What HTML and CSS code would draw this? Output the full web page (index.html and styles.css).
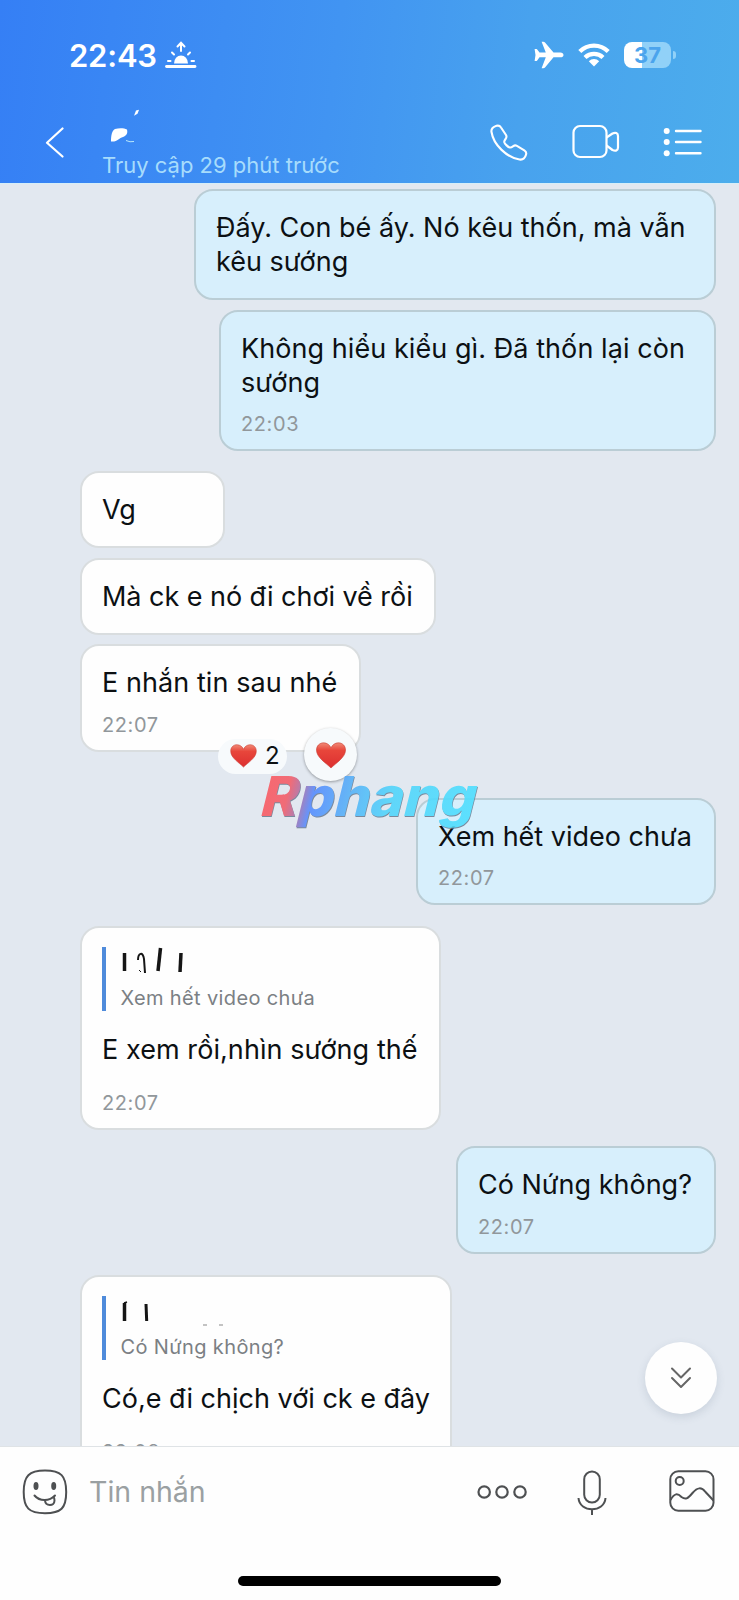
FILE: index.html
```html
<!DOCTYPE html>
<html lang="vi">
<head>
<meta charset="utf-8">
<title>Tin nhắn</title>
<link rel="stylesheet" href="styles.css">
</head>
<body>
<div class="app">
  <header class="header">
    <div class="status">
      <span class="clock">22:43</span>
      <svg class="sunrise" width="32" height="28" viewBox="0 0 32 28" fill="none" stroke="#fff" stroke-width="2" stroke-linecap="round">
        <path d="M1.500 25.500h28.500" stroke-width="2.800"/><path d="M16 10V2M12.500 5.500L16 1.800l3.500 3.700M7 11.500l2 2M25 11.500l-2 2M3 20h2.500M26.500 20H29"/>
        <path d="M9 22.500a7 8 0 0 1 14 0z" fill="#fff" stroke="none"/>
      </svg>
      <span class="spacer"></span>
      <svg width="30" height="28" viewBox="0 0 30 28" fill="#fff"><path d="M26.500 11.500c1.700 0 3 1.100 3 2.400s-1.300 2.400-3 2.400h-7L11 26.500c-.4.500-1 .7-1.700.7H7.600l4.200-10.900H5.500l-2.300 3.200c-.3.400-.7.500-1.200.5H.6L1.500 14 .6 7.900H2c.5 0 .9.100 1.200.5l2.300 3.100h6.300L7.600.8h1.700c.7 0 1.300.2 1.700.7l8.500 10z"/></svg>
      <svg class="wifi" width="32" height="26" viewBox="0 0 32 26" fill="none" stroke="#fff" stroke-width="4.300"><path d="M1.800 9.500a20 20 0 0 1 28.400 0M7 15.500a13 13 0 0 1 18 0"/><path d="M16 24.500l-5.200-5.300a7.500 7.500 0 0 1 10.400 0z" fill="#fff" stroke="none"/></svg>
      <span class="battery">37</span><span class="battery-tip"></span>
    </div>
    <div class="nav">
      <svg class="back" width="20" height="31" viewBox="0 0 20 31" fill="none" stroke="#fff" stroke-width="2.200" stroke-linecap="round" stroke-linejoin="round"><path d="M17.500 1.500L2 15.800l15.500 13.700"/></svg>
      <div class="contact">
        <svg width="60" height="36" viewBox="0 0 60 36"><path d="M34 2.500l3-.7-1.500 4-3.500 2z" fill="#fff"/><path d="M9 33.500c0-6 1-11 4-12.500 4-1 9-1 12 .5 1 4-.5 6-4 7.500-4 1-5 5-12 4.500z" fill="#fff"/><path d="M24 32.500q4 2 8 1" stroke="#b9e8fb" fill="none"/></svg>
        <span class="seen">Truy cập 29 phút trước</span>
      </div>
      <svg class="phone" width="38" height="38" viewBox="0 0 38 38" fill="none" stroke="#fff" stroke-width="2.100" stroke-linejoin="round"><path d="M1.500 8C1 5.500 3 3 6.500 1.800c2-.6 3.300-.2 4.500 1.700l5 7.500c1 1.600.6 2.500-.4 4-.9 1.200-1.600 2-1.300 3.200.5 1.700 3.800 5 5.500 5.300 1.200.2 2-.3 3.500-1.400 1.300-.9 2.200-1 3.600-.2l7.400 4.400c1.900 1.200 2.400 2.300 1.700 4.500C35 34 32.500 36 29.500 35.500 17 33.500 3.500 21 1.500 8z"/></svg>
      <svg class="video" width="48" height="36" viewBox="0 0 48 36" fill="none" stroke="#fff" stroke-width="2.200" stroke-linejoin="round"><rect x="1.500" y="2" width="33" height="31" rx="6.500"/><path d="M34.500 13.500l6-4c3-1.500 5.500-.5 5.500 2.500v11.500c0 3-2.500 4-5.500 2.500l-6-4.500"/></svg>
      <svg class="list" width="40" height="30" viewBox="0 0 40 30" fill="#fff"><circle cx="3.700" cy="4" r="3"/><circle cx="3.700" cy="15" r="3"/><circle cx="3.700" cy="26.300" r="3"/><path d="M13 4h24.500M13 15h24.500M13 26.300h24.500" stroke="#fff" stroke-width="2.400" stroke-linecap="round"/></svg>
    </div>
  </header>

  <main class="chat">
    <div class="bubble out w522"><p>Đấy. Con bé ấy. Nó kêu thốn, mà vẫn<br>kêu sướng</p></div>
    <div class="bubble out timed w497"><p class="loose">Không hiểu kiểu gì. Đã thốn lại còn<br>sướng</p><time>22:03</time></div>
    <div class="bubble in w145 turn"><p>Vg</p></div>
    <div class="bubble in w356"><p class="snug">Mà ck e nó đi chơi về rồi</p></div>
    <div class="bubble in timed w281"><p class="loose">E nhắn tin sau nhé</p><time>22:07</time>
      <div class="reactions">
        <span class="count"><svg width="27" height="24" viewBox="0 0 30 27"><use href="#heart"/></svg>2</span>
        <span class="react"><svg width="30" height="27" viewBox="0 0 30 27"><use href="#heart"/></svg></span>
      </div>
    </div>
    <div class="bubble out timed w300 after-reaction"><p>Xem hết video chưa</p><time>22:07</time>
      <svg class="watermark" width="240" height="70" viewBox="0 0 240 70">
        <defs>
          <linearGradient id="brand" gradientUnits="userSpaceOnUse" x1="8" y1="0" x2="225" y2="0"><stop offset="0" stop-color="#fb5b62"/><stop offset=".12" stop-color="#f25f6b"/><stop offset=".19" stop-color="#9f76b6"/><stop offset=".24" stop-color="#568cff"/><stop offset=".4" stop-color="#58b0f7"/><stop offset=".6" stop-color="#52d5fb"/><stop offset="1" stop-color="#4fdfff"/></linearGradient>
        </defs>
        <g class="brand-text" transform="skewX(-14)"><text class="brand-shadow" x="11" y="49" textLength="215" lengthAdjust="spacingAndGlyphs">Rphang</text><text x="10" y="47.500" textLength="215" lengthAdjust="spacingAndGlyphs" fill="url(#brand)">Rphang</text></g>
      </svg>
    </div>
    <div class="bubble in timed quoted w361 turn21">
      <div class="quote"><svg width="110" height="30" viewBox="0 0 110 30" fill="none" stroke="#151515"><path d="M3.500 6v18" stroke-width="3.500"/><path d="M17 13c0-7 5-9 6-1l1 14" stroke-width="2"/><path d="M18 23l2 2" stroke-width="1"/><path d="M39.500 1L37 24" stroke-width="3.500"/><path d="M60 6l-1 19" stroke-width="3.500"/></svg><span>Xem hết video chưa</span></div>
      <p class="loose">E xem rồi,nhìn sướng thế</p><time>22:07</time>
    </div>
    <div class="bubble out timed w260 turn16"><p>Có Nứng không?</p><time>22:07</time></div>
    <div class="bubble in timed quoted w372 turn21">
      <div class="quote"><svg width="110" height="30" viewBox="0 0 110 30" fill="none" stroke="#151515"><path d="M3.500 7v18" stroke-width="3.500"/><path d="M3 7l3-1" stroke-width="1.500"/><path d="M25 8l.7 17" stroke-width="3"/><path d="M82 29h4M98 29h4" stroke="#888" stroke-width="1"/></svg><span>Có Nứng không?</span></div>
      <p>Có,e đi chịch với ck e đây</p><time>22:08</time>
    </div>
    <button class="scroll-down" aria-label="Xuống cuối"><svg width="22" height="24" viewBox="0 0 22 24" fill="none" stroke="#666" stroke-width="2" stroke-linecap="round" stroke-linejoin="round"><path d="M2 2.500l9 9 9-9M2 12l9 9 9-9"/></svg></button>
  </main>

  <footer class="footer">
    <div class="composer">
      <svg class="sticker" width="46" height="46" viewBox="0 0 46 46" fill="none" stroke="#4e5052" stroke-width="2"><path d="M23 1.600c16 0 21.200 5 21.200 21.400S39 44.200 23 44.200 1.700 39 1.700 23 7 1.600 23 1.600z"/><ellipse cx="14" cy="17" rx="2.500" ry="4" fill="#4e5052" stroke="none"/><ellipse cx="31.700" cy="17" rx="2.500" ry="4" fill="#4e5052" stroke="none"/><path d="M12.500 26.500c5 6 15 6 20.500 0" stroke-linecap="round"/><path d="M23 31.500c.5 6 9.500 6 9.500 0 0-1.500-.5-3-1-3.500"/></svg>
      <span class="placeholder">Tin nhắn</span>
      <svg class="more" width="50" height="16" viewBox="0 0 50 16" fill="none" stroke="#4e5052" stroke-width="2.200"><circle cx="7.200" cy="8" r="5.700"/><circle cx="25" cy="8" r="5.700"/><circle cx="43" cy="8" r="5.700"/></svg>
      <svg class="mic" width="30" height="46" viewBox="0 0 30 46" fill="none" stroke="#4e5052" stroke-width="2"><rect x="7.200" y="1.500" width="15.600" height="31" rx="7.800"/><path d="M1.500 28c1 15 26 15 27 0M15 39v6"/></svg>
      <svg class="image" width="46" height="42" viewBox="0 0 46 42" fill="none" stroke="#4e5052" stroke-width="2"><rect x="1.300" y="1.300" width="43.200" height="39.400" rx="8"/><circle cx="10.700" cy="11" r="4"/><path d="M1.500 30c4-7 7-7 11-3 4 3 6 2 11-4 5-6 9-6 13-1l8 8.500"/></svg>
    </div>
    <div class="home"></div>
  </footer>
</div>
<svg class="symbols" width="0" height="0">
  <defs>
    <linearGradient id="red" x1="0" y1="0" x2="0" y2="1"><stop offset="0" stop-color="#f08b78"/><stop offset=".3" stop-color="#e8463b"/><stop offset="1" stop-color="#dc2f30"/></linearGradient>
    <symbol id="heart" viewBox="0 0 30 27"><path d="M15 26C10 21 .5 15.500.5 8 .5 3.800 3.700.8 7.500.8c3.400 0 6.200 2 7.500 5 1.300-3 4.100-5 7.500-5 3.800 0 7 3 7 7.200C29.500 15.500 20 21 15 26z" fill="url(#red)" stroke="#c93a30" stroke-width=".6"/></symbol>
  </defs>
</svg>
</body>
</html>
```

FILE: styles.css
```css
* { box-sizing: border-box; }
body { margin: 0; background: #fefefe; font-family: Inter, "Noto Sans", sans-serif; color: #0c1013; }
svg { display: block; flex: none; }
p { margin: 0; }
.symbols { position: absolute; }
.app { width: 739px; height: 1600px; display: flex; flex-direction: column; overflow: hidden; }

.header { height: 183px; flex: none; background: linear-gradient(97deg, #357ff5 0%, #4194f2 45%, #48a2ee 70%, #4cadec 100%); color: #fff; }
.status { height: 110px; padding: 0 68px 0 69px; display: flex; align-items: center; }
.clock { font-size: 31px; font-weight: 600; letter-spacing: -.2px; width: 96px; white-space: nowrap; }
.spacer { flex: 1; }
.wifi { margin: 0 14px 0 14px; }
.battery { width: 47px; height: 26px; border-radius: 8px; background: linear-gradient(90deg, #fff 38%, #91d1f8 38%); color: #4ba4ed; font-size: 22px; line-height: 26px; font-weight: 700; text-align: center; }
.battery-tip { width: 3px; height: 8px; margin-left: 2px; border-radius: 0 3px 3px 0; background: #91d1f8; margin-right: -5px; }
.nav { height: 73px; display: flex; align-items: flex-start; padding: 0 35px 0 45px; }
.back { margin-top: 17px; }
.contact { width: 387px; padding-left: 37px; margin-top: -2px; }
.seen { display: block; color: #a7dcfc; font-size: 22px; line-height: 26px; margin-top: 8px; white-space: nowrap; }
.phone { margin-top: 14px; margin-left: 38px; }
.video { margin-top: 14px; margin-left: 44px; }
.list { margin-top: 17px; margin-left: 43px; }

.chat { position: relative; height: 1263px; flex: none; overflow: hidden; background: #e2e8f0; padding: 5px 23px 0 80px; display: flex; flex-direction: column; border-top: 1px solid #d6eef8; }
.bubble { position: relative; flex: none; border: 2px solid #d9dddf; border-radius: 19px; padding: 20px 20px 19px 20px; background: #fefefe; font-size: 27px; line-height: 34px; white-space: nowrap; margin-top: 9.500px; }
.bubble:first-child { margin-top: 0; }
.bubble.timed { padding-bottom: 13px; }
.bubble.out { align-self: flex-end; background: #d7effc; border-color: #bacdd5; }
.bubble.in { align-self: flex-start; }
.bubble.quoted { padding-top: 19px; }
time { display: block; margin-top: 12.500px; font-size: 20px; line-height: 24px; color: #91979b; letter-spacing: .6px; }
.quoted time { margin-top: 24px; }
.bubble.turn { margin-top: 20px; }
.bubble.turn16 { margin-top: 16px; }
.bubble.turn21 { margin-top: 21px; }
.bubble.after-reaction { margin-top: 46px; }
.loose { letter-spacing: .07px; }
.snug { letter-spacing: -.04px; }
.w522 { width: 522px; }
.w497 { width: 497px; }
.w145 { width: 145px; }
.w356 { width: 356px; }
.w281 { width: 281px; }
.w300 { width: 300px; }
.w361 { width: 361px; }
.w260 { width: 260px; }
.w372 { width: 372px; }

.quote { height: 64px; border-left: 4px solid #4f8bdb; padding-left: 15px; margin-left: -.5px; margin-bottom: 22px; font-size: 20px; line-height: 24px; color: #7b8084; letter-spacing: .37px; }
.quote span { display: block; margin-top: 9px; }

.reactions { position: absolute; left: 136px; top: 82px; display: flex; align-items: center; gap: 17px; }
.count { width: 69px; height: 35px; border-radius: 18px; background: #f7fafc; display: flex; align-items: center; gap: 8px; padding-left: 12px; font-size: 24px; margin-top: 3px; }
.react { width: 53px; height: 53px; border-radius: 50%; background: #f7fafc; display: flex; align-items: center; justify-content: center; padding-top: 2px; box-shadow: 0 1px 3px rgba(0, 0, 0, .35); }
.watermark { position: absolute; left: -158px; top: -32px; opacity: .9; overflow: visible; }
.brand-text { font: 800 55px Inter, sans-serif; }
.brand-shadow { fill: #6f7f93; }

.scroll-down { position: absolute; left: 644.500px; top: 1158px; width: 72px; height: 72px; padding: 0; border: 0; border-radius: 50%; background: #fefefe; display: flex; align-items: center; justify-content: center; box-shadow: 0 3px 8px rgba(60, 80, 110, .15); }

.footer { flex: 1; background: #fefefe; border-top: 1px solid #dfe3e6; }
.composer { display: flex; align-items: flex-start; height: 129px; padding: 22px 24px 0 22px; }
.placeholder { width: 409px; padding-left: 21px; font-size: 28.500px; line-height: 46px; color: #9aa0a2; }
.more { margin-top: 15px; }
.mic { margin: 1px 0 0 50px; }
.image { margin: 1px 0 0 62px; }
.home { width: 263px; height: 10px; border-radius: 5px; background: #000; margin: 0 auto; }
```
